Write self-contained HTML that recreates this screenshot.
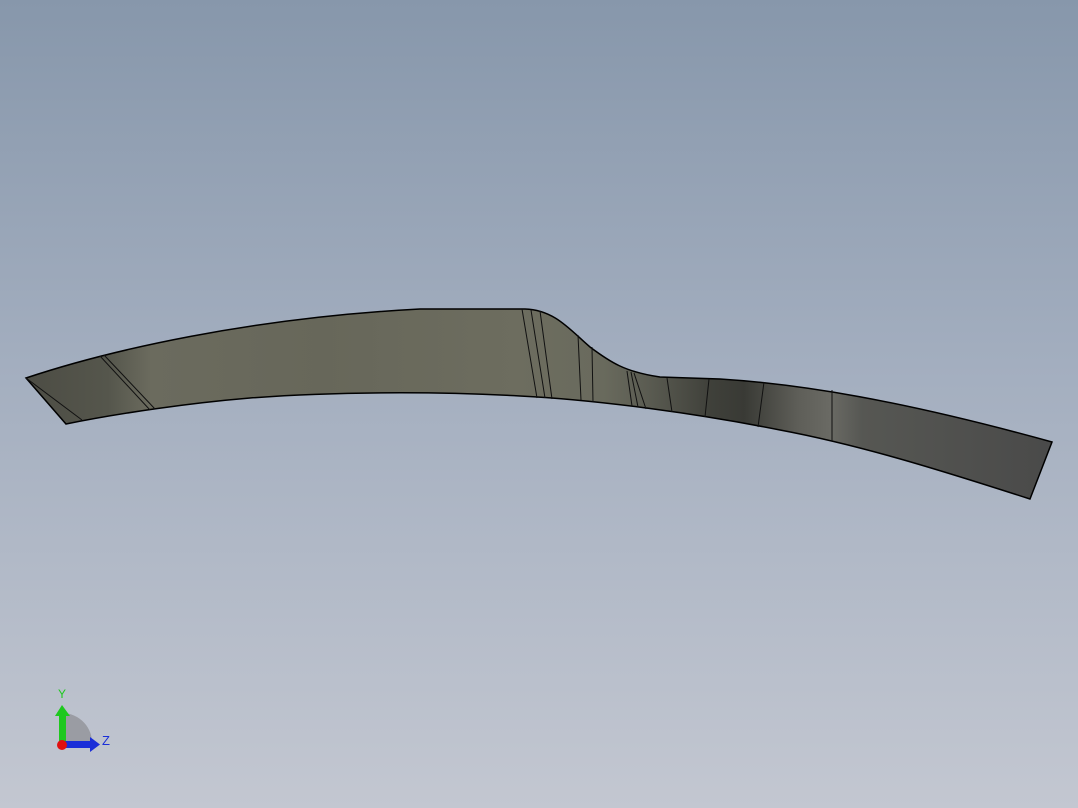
<!DOCTYPE html>
<html><head><meta charset="utf-8"><style>
html,body{margin:0;padding:0;width:1078px;height:808px;overflow:hidden}
body{background:linear-gradient(#8797ab 0%,#a3aebf 45%,#c3c7d1 100%);font-family:"Liberation Sans",sans-serif}
</style></head><body>
<svg width="1078" height="808" viewBox="0 0 1078 808" style="position:absolute;left:0;top:0">
<defs>
<linearGradient id="g" x1="0" y1="0" x2="1078" y2="0" gradientUnits="userSpaceOnUse">
<stop offset="0.02" stop-color="#4c4c44"/>
<stop offset="0.1" stop-color="#55564c"/>
<stop offset="0.14" stop-color="#6b6b5e"/>
<stop offset="0.3" stop-color="#67675a"/>
<stop offset="0.48" stop-color="#6d6d5f"/>
<stop offset="0.56" stop-color="#696a5d"/>
<stop offset="0.6" stop-color="#5b5c52"/>
<stop offset="0.66" stop-color="#3f403a"/>
<stop offset="0.69" stop-color="#393a35"/>
<stop offset="0.74" stop-color="#5e5e58"/>
<stop offset="0.77" stop-color="#6a6a64"/>
<stop offset="0.8" stop-color="#565753"/>
<stop offset="1" stop-color="#484848"/>
</linearGradient>
</defs>
<path d="M26,378 C110,350 250,318 420,309 L525,309 C555,310 570,330 590,347 C610,362 625,372 660,377 L720,379 C800,384 900,400 1052,442 L1030,499 C940,470 860,445 780,430 C700,414 600,400 520,396 C430,391 330,392 250,398 C190,403 120,413 66,424 Z" fill="url(#g)" stroke="#000" stroke-width="1.5"/>
<g stroke="#111" stroke-width="1" fill="none">
<path d="M26,378 L82,420"/>
<path d="M100,356 L150,410 M104,355 L155,409"/>
<path d="M522,309 L537,398 M531,310 L545,398 M540,311 L552,399"/>
<path d="M578,335 L581,400 M592,347 L593,402"/>
<path d="M627,371 L632,406 M631,372 L638,407 M634,373 L646,409"/>
<path d="M667,378 L672,412 M709,379 L705,417 M764,382 L758,427 M832,390 L832,441"/>
</g>
<path d="M62,745 L62,713 A30,30 0 0,1 92,745 Z" fill="#9a9ca3"/>
<rect x="59" y="714" width="7" height="31" fill="#1ec81e"/>
<polygon points="55,716 62,705 70,716" fill="#1ec81e"/>
<rect x="62" y="741" width="30" height="7" fill="#1a2ed8"/>
<polygon points="90,737 100,744.5 90,752" fill="#1a2ed8"/>
<circle cx="62" cy="745" r="5" fill="#e01010"/>
<text x="58" y="698" font-size="12" fill="#1ec81e" font-family="Liberation Sans,sans-serif">Y</text>
<text x="102" y="745" font-size="13" fill="#1a2ed8" font-family="Liberation Sans,sans-serif">Z</text>
</svg>
</body></html>
